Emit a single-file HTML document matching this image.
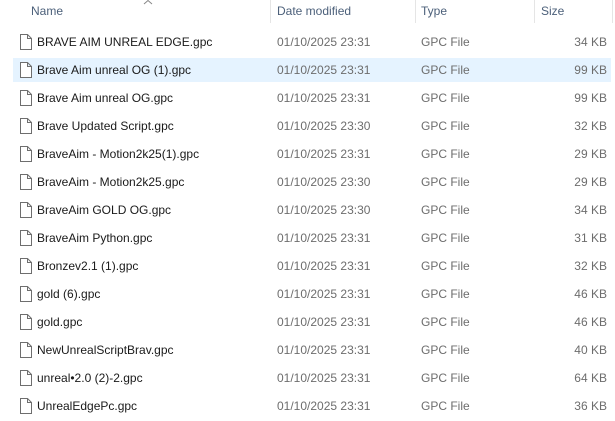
<!DOCTYPE html>
<html><head><style>
body{margin:0;width:615px;height:421px;background:#fff;font-family:"Segoe UI","Liberation Sans",sans-serif;font-size:12px;color:#1a1a1a;position:relative;overflow:hidden}
.h{position:absolute;top:4px;color:#4c607a;font-size:12px}
.sep{position:absolute;top:0;height:23px;width:1px;background:#e5e5e5}
.row{position:absolute;left:13px;width:598px;height:24px}
.row.sel{background:#e5f3ff}
.row span{position:absolute;top:5px;white-space:nowrap}
.n{left:24px;color:#1a1a1a}
.d{left:264px;color:#6d6d6d}
.t{left:408px;color:#6d6d6d}
.s{right:4px;color:#6d6d6d}
.ic{position:absolute;left:7px;top:4px}
</style></head><body>
<svg style="position:absolute;left:143px;top:0" width="10" height="5"><path d="M1 4L5 0.5L9 4" stroke="#888" fill="none"/></svg>
<div class="h" style="left:31px">Name</div>
<div class="sep" style="left:270px"></div>
<div class="h" style="left:277px">Date modified</div>
<div class="sep" style="left:415px"></div>
<div class="h" style="left:421px">Type</div>
<div class="sep" style="left:534px"></div>
<div class="h" style="left:541px">Size</div>
<div class="sep" style="left:612px"></div>
<div id="rows"></div>
<script></script>
<div class="row" style="top:30px"><svg class="ic" width="12" height="16"><path d="M0.5 0.5H7.5L11.5 4.5V15.5H0.5Z M7.5 0.5V4.5H11.5" stroke="#6e6e6e" fill="#fff"/></svg><span class="n">BRAVE AIM UNREAL EDGE.gpc</span><span class="d">01/10/2025 23:31</span><span class="t">GPC File</span><span class="s">34 KB</span></div>
<div class="row sel" style="top:58px"><svg class="ic" width="12" height="16"><path d="M0.5 0.5H7.5L11.5 4.5V15.5H0.5Z M7.5 0.5V4.5H11.5" stroke="#6e6e6e" fill="#fff"/></svg><span class="n">Brave Aim unreal OG (1).gpc</span><span class="d">01/10/2025 23:31</span><span class="t">GPC File</span><span class="s">99 KB</span></div>
<div class="row" style="top:86px"><svg class="ic" width="12" height="16"><path d="M0.5 0.5H7.5L11.5 4.5V15.5H0.5Z M7.5 0.5V4.5H11.5" stroke="#6e6e6e" fill="#fff"/></svg><span class="n">Brave Aim unreal OG.gpc</span><span class="d">01/10/2025 23:31</span><span class="t">GPC File</span><span class="s">99 KB</span></div>
<div class="row" style="top:114px"><svg class="ic" width="12" height="16"><path d="M0.5 0.5H7.5L11.5 4.5V15.5H0.5Z M7.5 0.5V4.5H11.5" stroke="#6e6e6e" fill="#fff"/></svg><span class="n">Brave Updated Script.gpc</span><span class="d">01/10/2025 23:30</span><span class="t">GPC File</span><span class="s">32 KB</span></div>
<div class="row" style="top:142px"><svg class="ic" width="12" height="16"><path d="M0.5 0.5H7.5L11.5 4.5V15.5H0.5Z M7.5 0.5V4.5H11.5" stroke="#6e6e6e" fill="#fff"/></svg><span class="n">BraveAim - Motion2k25(1).gpc</span><span class="d">01/10/2025 23:31</span><span class="t">GPC File</span><span class="s">29 KB</span></div>
<div class="row" style="top:170px"><svg class="ic" width="12" height="16"><path d="M0.5 0.5H7.5L11.5 4.5V15.5H0.5Z M7.5 0.5V4.5H11.5" stroke="#6e6e6e" fill="#fff"/></svg><span class="n">BraveAim - Motion2k25.gpc</span><span class="d">01/10/2025 23:30</span><span class="t">GPC File</span><span class="s">29 KB</span></div>
<div class="row" style="top:198px"><svg class="ic" width="12" height="16"><path d="M0.5 0.5H7.5L11.5 4.5V15.5H0.5Z M7.5 0.5V4.5H11.5" stroke="#6e6e6e" fill="#fff"/></svg><span class="n">BraveAim GOLD OG.gpc</span><span class="d">01/10/2025 23:30</span><span class="t">GPC File</span><span class="s">34 KB</span></div>
<div class="row" style="top:226px"><svg class="ic" width="12" height="16"><path d="M0.5 0.5H7.5L11.5 4.5V15.5H0.5Z M7.5 0.5V4.5H11.5" stroke="#6e6e6e" fill="#fff"/></svg><span class="n">BraveAim Python.gpc</span><span class="d">01/10/2025 23:31</span><span class="t">GPC File</span><span class="s">31 KB</span></div>
<div class="row" style="top:254px"><svg class="ic" width="12" height="16"><path d="M0.5 0.5H7.5L11.5 4.5V15.5H0.5Z M7.5 0.5V4.5H11.5" stroke="#6e6e6e" fill="#fff"/></svg><span class="n">Bronzev2.1 (1).gpc</span><span class="d">01/10/2025 23:31</span><span class="t">GPC File</span><span class="s">32 KB</span></div>
<div class="row" style="top:282px"><svg class="ic" width="12" height="16"><path d="M0.5 0.5H7.5L11.5 4.5V15.5H0.5Z M7.5 0.5V4.5H11.5" stroke="#6e6e6e" fill="#fff"/></svg><span class="n">gold (6).gpc</span><span class="d">01/10/2025 23:31</span><span class="t">GPC File</span><span class="s">46 KB</span></div>
<div class="row" style="top:310px"><svg class="ic" width="12" height="16"><path d="M0.5 0.5H7.5L11.5 4.5V15.5H0.5Z M7.5 0.5V4.5H11.5" stroke="#6e6e6e" fill="#fff"/></svg><span class="n">gold.gpc</span><span class="d">01/10/2025 23:31</span><span class="t">GPC File</span><span class="s">46 KB</span></div>
<div class="row" style="top:338px"><svg class="ic" width="12" height="16"><path d="M0.5 0.5H7.5L11.5 4.5V15.5H0.5Z M7.5 0.5V4.5H11.5" stroke="#6e6e6e" fill="#fff"/></svg><span class="n">NewUnrealScriptBrav.gpc</span><span class="d">01/10/2025 23:31</span><span class="t">GPC File</span><span class="s">40 KB</span></div>
<div class="row" style="top:366px"><svg class="ic" width="12" height="16"><path d="M0.5 0.5H7.5L11.5 4.5V15.5H0.5Z M7.5 0.5V4.5H11.5" stroke="#6e6e6e" fill="#fff"/></svg><span class="n">unreal•2.0 (2)-2.gpc</span><span class="d">01/10/2025 23:31</span><span class="t">GPC File</span><span class="s">64 KB</span></div>
<div class="row" style="top:394px"><svg class="ic" width="12" height="16"><path d="M0.5 0.5H7.5L11.5 4.5V15.5H0.5Z M7.5 0.5V4.5H11.5" stroke="#6e6e6e" fill="#fff"/></svg><span class="n">UnrealEdgePc.gpc</span><span class="d">01/10/2025 23:31</span><span class="t">GPC File</span><span class="s">36 KB</span></div>
</body></html>
